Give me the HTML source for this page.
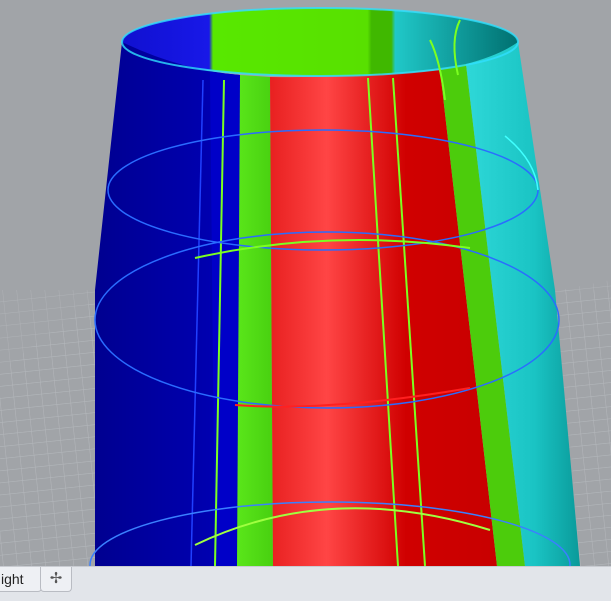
<!DOCTYPE html>
<html><head><style>
html,body{margin:0;padding:0;width:611px;height:600px;overflow:hidden;background:#a1a4a8;font-family:"Liberation Sans",sans-serif}
svg{position:absolute;left:0;top:0}
.bar{position:absolute;left:0;top:566px;width:611px;height:34px;background:#e2e5ea;border-top:1px solid #c9ccd2}
.tab{position:absolute;top:0;height:24px;background:#eef0f4;border:1px solid #b9bcc3;border-top:none;border-radius:0 0 4px 4px;font-size:14px;color:#222;line-height:24px}
</style></head><body>
<svg width="611" height="566" viewBox="0 0 611 566">
<defs>
<pattern id="g" width="14" height="12" patternUnits="userSpaceOnUse" patternTransform="rotate(-6)">
<path d="M0 0H14M0 0V12" stroke="#b4b7bb" stroke-width="0.7" fill="none"/>
</pattern>
<linearGradient id="red" x1="0" x2="1"><stop offset="0" stop-color="#e82020"/><stop offset="0.25" stop-color="#ff4545"/><stop offset="0.6" stop-color="#d00000"/><stop offset="1" stop-color="#c80000"/></linearGradient>
<linearGradient id="cy" x1="0" x2="1"><stop offset="0" stop-color="#2ed8d8"/><stop offset="0.6" stop-color="#1ac4c4"/><stop offset="1" stop-color="#0a9a9a"/></linearGradient>
<linearGradient id="bl" x1="0" x2="1"><stop offset="0" stop-color="#000090"/><stop offset="1" stop-color="#0000b8"/></linearGradient>
<linearGradient id="gr" x1="0" x2="1"><stop offset="0" stop-color="#5ae61a"/><stop offset="1" stop-color="#48d010"/></linearGradient>
<linearGradient id="in" x1="0" x2="1"><stop offset="0" stop-color="#1010d0"/><stop offset="0.22" stop-color="#1818e8"/><stop offset="0.23" stop-color="#58e800"/><stop offset="0.62" stop-color="#58e000"/><stop offset="0.63" stop-color="#40b800"/><stop offset="0.68" stop-color="#40b800"/><stop offset="0.69" stop-color="#20c8c8"/><stop offset="1" stop-color="#007070"/></linearGradient>
</defs>
<rect x="0" y="260" width="611" height="306" fill="url(#g)"/>
<rect x="0" y="0" width="611" height="290" fill="#a1a4a8"/>
<polygon points="0,370 0,566 95,566 95,300" fill="url(#g)"/>
<polygon points="611,280 611,566 580,566 560,290" fill="url(#g)"/>
<!-- inner top -->
<ellipse cx="320" cy="42" rx="198" ry="34" fill="url(#in)"/>
<!-- body -->
<path d="M122,42 L95,290 L95,566 L240,566 L240,75 Q180,70 122,42Z" fill="url(#bl)"/>
<path d="M210,72 L240,75 L237,566 L215,566Z" fill="#0000c8"/>
<path d="M240,75 L270,77 L273,566 L237,566Z" fill="url(#gr)"/>
<path d="M270,77 Q360,78 440,70 L497,566 L273,566Z" fill="url(#red)"/>
<path d="M440,70 L466,64 L525,566 L497,566Z" fill="#4ccc0c"/>
<path d="M466,64 Q500,55 518,42 L555,290 L580,566 L525,566Z" fill="url(#cy)"/>
<!-- top rim -->
<ellipse cx="320" cy="42" rx="198" ry="34" fill="none" stroke="#30e0ff" stroke-width="2" opacity=".8"/>
<!-- vertical lines -->
<g stroke="#7cff20" stroke-width="2" fill="none">
<path d="M224,80 L215,566"/><path d="M368,78 L398,566"/><path d="M393,78 L425,566"/>
<path d="M430,40 Q440,60 445,100"/><path d="M460,20 Q450,40 458,75"/>
</g>
<path d="M203,80 L191,566" stroke="#2040ff" stroke-width="1.5"/>
<!-- mid ellipses -->
<g fill="none" stroke-width="1.5">
<ellipse cx="323" cy="190" rx="215" ry="60" stroke="#2a6cff"/>
<ellipse cx="327" cy="320" rx="232" ry="88" stroke="#2a6cff"/>
<ellipse cx="330" cy="565" rx="240" ry="63" stroke="#3a80ff"/>
</g>
<path d="M195,258 Q330,228 470,248" stroke="#7cff20" stroke-width="2" fill="none"/>
<path d="M235,405 Q330,412 470,388" stroke="#ff2020" stroke-width="2" fill="none"/>
<path d="M195,545 Q330,480 490,530" stroke="#a0ff40" stroke-width="2" fill="none"/>
<path d="M505,136 Q535,160 538,190" stroke="#40ffff" stroke-width="1.5" fill="none"/>
</svg>
<div class="bar">
<div class="tab" style="left:-6px;width:40px;padding-left:6px">ight</div>
<div class="tab" style="left:40px;width:30px;text-align:center;font-size:15px;color:#555">✢</div>
</div>
</body></html>
